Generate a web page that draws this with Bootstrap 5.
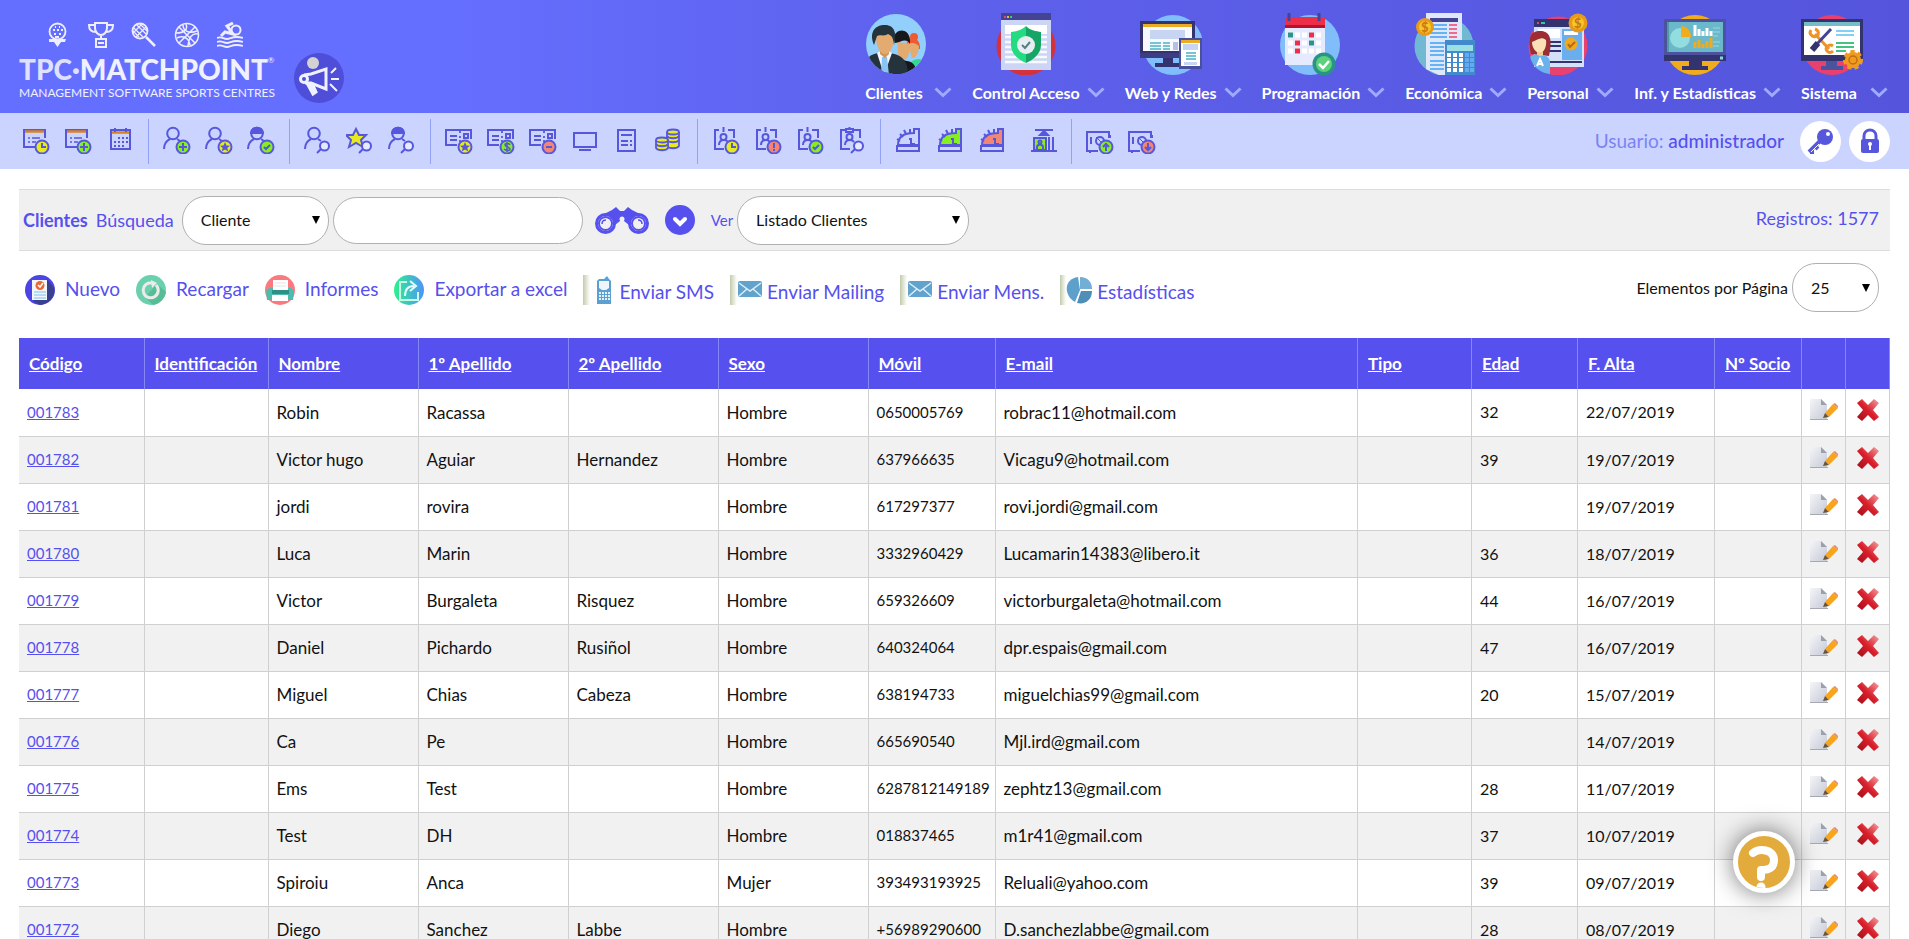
<!DOCTYPE html>
<html lang="es">
<head>
<meta charset="utf-8">
<meta name="viewport" content="width=device-width, initial-scale=1">
<title>TPC Matchpoint - Clientes</title>
<link href="https://cdn.jsdelivr.net/npm/bootstrap@5.3.0/dist/css/bootstrap.min.css" rel="stylesheet">
<style>
:root{--ind:#5650ee;--ico:#5657dd;--bar:#cbd4ff}
body{font-family:Lato,"Liberation Sans",sans-serif;font-size:17px;color:#111;background:#fff}
a{color:var(--ind);text-decoration:none}
svg{display:block;flex:none}
.ln{fill:none;stroke:#5657dd;stroke-width:2}
.top-head{height:113px;background:linear-gradient(90deg,#656fff 0,#656fff 22%,#5e61ec 48%,#5455dc 100%);padding:0 21px 0 19px}
.brand-box{width:259px;color:#f0f1ff}
.brand-sports{gap:17px;padding:22px 0 0 29px}
.brand-name{font-size:28px;line-height:35px;font-weight:900;white-space:nowrap}
.brand-name span{color:#dfe1ff}
.brand-name sup{font-size:8px;font-weight:400;top:-17px}
.brand-sub{font-size:12px;line-height:12px;white-space:nowrap}
.mega{margin-top:53px}
.main-menu{gap:20px;padding-top:13px}
.main-menu a{color:#fff;font-weight:700;font-size:16px;line-height:24px}
.menu-cell{min-width:62px}
.menu-cell svg{margin:0 auto 6px}
.chev{margin:74px 0 0 7px}
.tool-bar{height:56px;background:var(--bar);padding-right:19px}
.tool-group{gap:14px;padding:0 14px 3px;height:45px;border-right:1px solid #93a2f8;align-items:center}
.tool-group:first-child{padding-left:22px}
.tool-group.end-group{border:0}
.tool-group button,.plain-btn{border:0;background:none;padding:0;display:block}
.user-text{font-size:19px;color:#7b83f3}
.user-text b{color:var(--ind);font-weight:500}
.round-btn{width:41px;height:41px;border:0;border-radius:50%;background:#fff;display:grid;place-items:center;padding:0}
.search-bar{margin:20px 19px 0;height:62px;background:#f0f0f0;border-top:1px solid #ddd;border-bottom:1px solid #ddd;padding:0 11px 0 4px;color:var(--ind);font-size:18px}
.pill{border:1px solid #b0b0b0;border-radius:24px;background:#fff;height:49px;font-size:16px;color:#111;padding:0 18px}
select.pill{appearance:none;background:#fff url("data:image/svg+xml,%3Csvg xmlns='http://www.w3.org/2000/svg' width='8' height='8'%3E%3Cpath d='M0 0h8L4 8z'/%3E%3C/svg%3E") no-repeat right 8px center}
.w-kind{width:147px}.w-find{width:250px;height:47px}.w-list{width:232px}.w-page{width:87px}
.small-lbl{font-size:15px}
.page-lbl{font-size:16px}
.act-bar{margin:0 30px 0 25px;height:87px;padding-top:12px}
.act-bar a{font-size:19px;line-height:28px;gap:10px}
.act-bar .ext{gap:5px;padding-top:3px}
.data-tbl{margin:0 19px;width:calc(100% - 38px);table-layout:fixed;border-collapse:collapse}
.data-tbl th{height:51px;background:var(--ind);padding:0 9px 0 10px;border-right:1px solid #8388f6;white-space:nowrap;font-size:17px}
.data-tbl th a{color:#fff;text-decoration:underline}
.data-tbl td{height:47px;padding:0 8px;border-right:1px solid #d0d0d0;border-bottom:1px solid #d0d0d0;white-space:nowrap}
.data-tbl td a{text-decoration:underline}
.data-tbl td:nth-child(1),.data-tbl td:nth-child(7){font-size:15px}
.data-tbl td:nth-child(10),.data-tbl td:nth-child(11){font-size:16px}
.data-tbl tbody tr:nth-child(even){background:#f1f1f1}
.data-tbl .plain-btn{margin-bottom:4px}
.help-btn{position:fixed;right:114px;bottom:46px;width:62px;height:62px;border-radius:50%;border:5px solid #fff;background:#e2ab3c;padding:0;overflow:hidden;box-shadow:0 0 24px rgba(0,0,0,.55)}
</style>
</head>
<body class="vh-100 overflow-hidden">
<svg width="0" height="0" class="position-absolute" aria-hidden="true">
<defs>
<linearGradient id="gEx"><stop stop-color="#2cf28a"/><stop offset="1" stop-color="#4f93fb"/></linearGradient>
<linearGradient id="gRed" x1="1" y1="0" x2="0" y2="1"><stop stop-color="#f6a3a3"/><stop offset=".5" stop-color="#d8202c"/><stop offset="1" stop-color="#a30d18"/></linearGradient>
<linearGradient id="gPg" x1="0" x2="1" y2="1"><stop stop-color="#f4f5f8"/><stop offset="1" stop-color="#c5c9d6"/></linearGradient>
<linearGradient id="gEdge"><stop stop-color="#c2cbaa"/><stop offset="1" stop-color="#fff"/></linearGradient>
<clipPath id="cR"><circle cx="31" cy="31" r="30"/></clipPath>
</defs>
<symbol id="calb" class="ln" viewBox="0 0 28 28"><path d="M23 12V4H2v17h12"/><path d="M3 5.500h19" stroke="#d98324" stroke-width="2.500"/><path d="M6 12h2m2 0h8M6 16h2m2 0h4" stroke-width="1.600"/></symbol>
<symbol id="tcal" class="ln" viewBox="0 0 28 28"><path d="M5 4h19v19H5z"/><path d="M6 6.500h17" stroke="#d98324" stroke-width="2.500"/><path d="M9 2v4M20 2v4"/><path d="M12 12h10M8 16h14M8 20h10" stroke-dasharray="2 2"/></symbol>
<symbol id="pers" class="ln" viewBox="0 0 28 28"><circle cx="10" cy="7.500" r="5.800"/><path d="M1 23c0-5 2-8 6-10m7 0l3 2"/></symbol>
<symbol id="capp" class="ln" viewBox="0 0 28 28"><circle cx="10" cy="7.500" r="5.800"/><path d="M4 7C4 0 16 0 16 7z" fill="#5657dd"/><path d="M1 23c0-5 2-8 6-10m7 0l3 2"/></symbol>
<symbol id="lens" class="ln" viewBox="0 0 28 28"><circle cx="20.500" cy="20" r="4.500" fill="#e6eaff"/><path d="M17 23l-4 4"/></symbol>
<symbol id="tcard" class="ln" viewBox="0 0 28 28"><path d="M26 13V4H1v15h11"/><path d="M5 10h7m-7 4h7m3-9v2m0 3v2m0 2v2" stroke-width="1.800"/><path d="M19 8h4v4h-4z"/></symbol>
<symbol id="tid" class="ln" viewBox="0 0 28 28"><path d="M22 12V4h-6M7 4H3v19h9M11.500 1v5"/><path d="M7 19c0-4 2-5 5-5s3 1 4 2"/><circle cx="11.500" cy="11" r="3"/></symbol>
<symbol id="tcash" class="ln" viewBox="0 0 28 28"><path d="M3 19C3 10 9 7 19 7V3h5v16z"/><path d="M2 20h22v5H2z" fill="#cbd4ff"/><path d="M2 13l3 2m0-7l3 3m1-7l2 4m4-5v4"/><path d="M14 13h2v5h4"/></symbol>
<symbol id="tsafe" class="ln" viewBox="0 0 28 28"><path d="M23 12V6H1v19h11M4 25v2M24 9v3M5 11v7"/><circle cx="14" cy="15" r="4"/><path d="M10 11l8 8" stroke-width="1"/></symbol>
<symbol id="bY" class="ln" viewBox="0 0 28 28"><circle cx="20" cy="21" r="6.500" fill="#e7ea1e"/></symbol>
<symbol id="bG" class="ln" viewBox="0 0 28 28"><circle cx="20" cy="21" r="6.500" fill="#86f01e"/></symbol>
<symbol id="bR" class="ln" viewBox="0 0 28 28"><circle cx="20" cy="21" r="6.500" fill="#f28672"/></symbol>
<symbol id="bstar" viewBox="0 0 28 28"><path d="M20 16l1.500 3.400 3.500.3-2.700 2.300 1 3.500-3.300-1.900-3.300 1.900 1-3.500-2.700-2.300 3.500-.3z" fill="#5657dd"/></symbol>
<symbol id="editI" viewBox="0 0 28 22"><path d="M0 0h11l6 6v15H0z" fill="url(#gPg)"/><path d="M11 0l6 6h-6z" fill="#9aa0b0"/><path d="M0 20.500h18" stroke="#a6a9b4"/><path d="M15 14L23 5l5 4-9 9z" fill="#f9a51b"/><path d="M23 5l2-1 3 3v2z" fill="#e58a6c"/><path d="M15 14l4 4-6 1z" fill="#6b553a"/></symbol>
<symbol id="delI" viewBox="0 0 24 24"><path d="M1 5l5-4 6 6 6-6 5 4-6 7 6 7-5 4-6-6-6 6-5-4 6-7z" fill="url(#gRed)"/></symbol>
<symbol id="mailI" viewBox="0 0 32 30"><path d="M0 0h7v30H0z" fill="url(#gEdge)"/><rect x="8" y="6" width="24" height="16" rx="2" fill="#62a3cd"/><path d="M9 8l11 8 11-8M9 21l8-7m14 7l-8-7" fill="none" stroke="#dceefa" stroke-width="1.500"/></symbol>
<symbol id="chevI" viewBox="0 0 18 11"><path d="M1.500 1.500L9 8.500l7.500-7" fill="none" stroke="#9fabff" stroke-width="3"/></symbol>
</svg>

<header class="top-head d-flex">
<div class="brand-box">
<div class="brand-sports d-flex">
<svg class="me-1" width="19" height="26" viewBox="0 0 19 26" fill="none" stroke="#eef" stroke-width="1.800"><circle cx="9.500" cy="9.500" r="8"/><path d="M5 8h2m2 0h2m2 0h2M6 12h2m3 0h2M7 5h1m3 0h1M7 15h4"/><path d="M1 17h17l-1 3h-4l-3.500 5L6 20H1z" fill="#eef" stroke="none"/></svg>
<svg width="26" height="26" viewBox="0 0 26 26" fill="none" stroke="#eef" stroke-width="2"><path d="M7 1h12v5c0 4-3 7-6 7S7 10 7 6zM7 3H1c0 5 3 7 7 7m11-7h6c0 5-3 7-7 7M13 13v4"/><path d="M8 17h10v8H8z"/><path d="M10 21h6"/></svg>
<svg width="26" height="26" viewBox="0 0 26 26" fill="none" stroke="#eef" stroke-width="1.800"><circle cx="9" cy="9" r="7.500"/><path d="M3 6l9 9M6 3l9 9M2 11l8-8M5 15L15 5M9 2l7 7M2 9l6 6" stroke-width="1.200"/><path d="M15 15l9 9" stroke-width="2.500"/></svg>
<svg width="26" height="26" viewBox="0 0 26 26" fill="none" stroke="#eef" stroke-width="1.500"><circle cx="13" cy="13" r="11.500"/><path d="M5 5l16 16M21 5L5 21M12 2c2 5-1 9-10 9m22 1c-6-1-9 3-10 12M9 3c0 6 6 9 14 6M3 16c6-3 12 0 13 7"/></svg>
<svg width="26" height="26" viewBox="0 0 26 26" fill="none" stroke="#eef" stroke-width="2"><circle cx="19" cy="8" r="4.500"/><path d="M16 1l-6 3 6 8-8-2-4 4" stroke-width="3"/><path d="M0 16c5-2 6 1 10 1s6-4 16-1M0 20c5-2 6 1 10 1s6-4 16-1M0 24c5-2 6 1 10 1s6-4 16-1" stroke-width="1.800"/></svg>
</div>
<div class="brand-name mt-1"><span>TPC·</span>MATCHPOINT<sup>®</sup></div>
<div class="brand-sub">MANAGEMENT SOFTWARE SPORTS CENTRES</div>
</div>
<button class="plain-btn mega align-self-start ms-3" aria-label="Novedades"><svg width="50" height="50" viewBox="0 0 50 50"><circle cx="25" cy="25" r="25" fill="#4f4ed8"/><g fill="none" stroke="#f0f1ff" stroke-width="3"><circle cx="10" cy="26" r="3.500"/><path d="M10 22l7-1 15-5v20l-15-6-6 0"/><path d="M13 30l6 11 3-2-4-9" fill="#f0f1ff"/><path d="M37 20l5-5M37 26h8M36 31l7 7" stroke-width="2"/></g><circle cx="19" cy="10" r="6" fill="#d3d3d3"/></svg></button>
<nav class="main-menu d-flex ms-auto" aria-label="Principal">
<a href="#" class="d-flex align-items-start"><span class="menu-cell"><svg width="62" height="62" viewBox="0 0 62 62"><g clip-path="url(#cR)"><path d="M0 0h62v62H0z" fill="#93cffb"/><path d="M40 62c2-18 18-20 22-10v10z" fill="#34d98f"/><circle cx="49" cy="24" r="4" fill="#ef5a32"/><path d="M41 34c0-12 15-12 14 2" fill="#ef5a32"/><path d="M43 30c3 0 7-1 11 3 0 8-4 12-7 12z" fill="#e3ab70"/><path d="M28 62c0-16 6-16 14-14 8 0 10 10 10 14z" fill="#16181c"/><path d="M33 28c4 4 9-1 12 5 0 6-2 14-7 14-4 0-6-6-5-19z" fill="#e3ab70"/><path d="M29 26c0-12 18-12 16 5-4-7-10-1-15-1z" fill="#16181c"/><path d="M0 62c0-20 6-20 13-22h12c10 2 18 5 18 22z" fill="#24333c"/><path d="M12 40l7 22 8-22-7-4z" fill="#f2f6ff"/><path d="M17 44h5l2 18h-8z" fill="#8ac3f5"/><path d="M15 36h9v5l-4 4-5-4z" fill="#d59653"/><path d="M11 24c0-6 18-6 18 0 0 9-4 17-9 17s-9-8-9-17z" fill="#e3ab70"/><path d="M9 32C4 20 9 12 20 12c10 0 12 9 9 20-1-8-2-9-6-11-5 3-8 0-11 2z" fill="#24333c"/></g></svg>Clientes</span><svg class="chev" width="18" height="11"><use href="#chevI"/></svg></a>
<a href="#" class="d-flex align-items-start"><span class="menu-cell"><svg width="62" height="62" viewBox="0 0 62 62"><circle cx="31" cy="33" r="29.500" fill="#d3323d"/><path d="M6 0h50v57H6z" fill="#ccd6f4"/><path d="M6 0h50v7H6z" fill="#454494"/><path d="M9 4h2" stroke="#e04a5b" stroke-width="2"/><path d="M12 4h2" stroke="#e5c02d" stroke-width="2"/><path d="M15 4h2" stroke="#38c796" stroke-width="2"/><path d="M10 12h42v9H10z" fill="#fff"/><path d="M10 24h42M10 29h42M10 34h42M10 39h42M10 44h42M10 49h42" stroke="#f8faff" stroke-width="2.500"/><path d="M31 13c5 5 10 5 15 6v13c0 9-8 15-15 18z" fill="#17a566"/><path d="M31 13c-5 5-10 5-15 6v13c0 9 8 15 15 18z" fill="#23dc82"/><circle cx="31" cy="32" r="9" fill="#e9eef2"/><path d="M27 32l3 3 5-6" fill="none" stroke="#568087" stroke-width="2"/></svg>Control Acceso</span><svg class="chev" width="18" height="11"><use href="#chevI"/></svg></a>
<a href="#" class="d-flex align-items-start"><span class="menu-cell"><svg width="62" height="62" viewBox="0 0 62 62"><circle cx="33" cy="32" r="30" fill="#80bdfa"/><path d="M0 8h55v37H0z" fill="#33336f"/><path d="M0 40h55v5H0z" fill="#3c3d84"/><path d="M3 11h49v27H3z" fill="#f7f9ff"/><path d="M3 11h49v3H3z" fill="#eaac25"/><path d="M10 17h35v9H10z" fill="#c7d5f3"/><path d="M10 30h11m2 0h7m-20 3h11m2 0h7m-20 3h11m2 0h7" stroke="#74c4d4" stroke-width="2"/><path d="M33 29h5v8h-5z" fill="#b8bfe7"/><path d="M23 45h10v5h6v4H15v-4h8z" fill="#33336f"/><path d="M39 25h23v31H39z" fill="#49509b"/><path d="M41 28h19v25H41z" fill="#fff"/><path d="M41 27h19v3H41z" fill="#eaac25"/><path d="M43 31h15v6H43z" fill="#c7d5f3"/><path d="M46 40h10m-10 3h10m-10 3h10" stroke="#74c4d4" stroke-width="2"/><path d="M44 49h13v3H44z" fill="#c7d5f3"/></svg>Web y Redes</span><svg class="chev" width="18" height="11"><use href="#chevI"/></svg></a>
<a href="#" class="d-flex align-items-start"><span class="menu-cell"><svg width="62" height="62" viewBox="0 0 62 62"><circle cx="30" cy="32" r="30" fill="#80bdfa"/><path d="M5 15h40v37H5z" fill="#e5eaff"/><path d="M5 4h40v11H5z" fill="#ee2d48"/><path d="M5 12h40v3H5z" fill="#b6122b"/><path d="M9 0v8M39 0v8" stroke="#454494" stroke-width="3"/><path d="M8 22h35M8 30h35M8 38h35" stroke="#fff" stroke-width="5" stroke-dasharray="5 2"/><path d="M8 22h5M29 30h5" stroke="#2b9486" stroke-width="5"/><path d="M29 22h5M15 30h5M15 38h5" stroke="#ee2d48" stroke-width="5"/><circle cx="44" cy="51" r="11.500" fill="#299388"/><circle cx="44" cy="51" r="8" fill="#5bd17d"/><path d="M39 51l4 4 6-7" fill="none" stroke="#fff" stroke-width="2.500"/></svg>Programación</span><svg class="chev" width="18" height="11"><use href="#chevI"/></svg></a>
<a href="#" class="d-flex align-items-start"><span class="menu-cell"><svg width="62" height="62" viewBox="0 0 62 62"><circle cx="31" cy="33" r="29.500" fill="#71b9d2"/><path d="M13 0h36v62H26l-13-6z" fill="#dfe8fb"/><path d="M17 5h28v4H17z" fill="#454494"/><path d="M17 12h17M17 16h17M17 20h17M17 24h17M17 30h16M17 34h14M17 38h14M17 42h14M17 48h14M17 52h14M17 56h14" stroke="#65b3f3" stroke-width="2"/><path d="M36 12h8M36 16h8M36 20h8M36 24h8" stroke="#ee6b92" stroke-width="2"/><circle cx="12" cy="14" r="9" fill="#e79b18"/><circle cx="12" cy="14" r="6" fill="#f7c52c"/><text x="8" y="19" font-size="13" font-weight="900" fill="#c97a12">$</text><path d="M32 27h30v35H32z" fill="#4289ce"/><path d="M34 32h26v6H34z" fill="#9adfe4"/><path d="M34 42h17M34 47h17M34 52h17M34 57h17" stroke="#fff" stroke-width="4" stroke-dasharray="4 2"/><path d="M52 42h9M52 47h9M52 52h9M52 57h9" stroke="#63abf0" stroke-width="4" stroke-dasharray="4 1"/></svg>Económica</span><svg class="chev" width="18" height="11"><use href="#chevI"/></svg></a>
<a href="#" class="d-flex align-items-start"><span class="menu-cell"><svg width="62" height="62" viewBox="0 0 62 62"><circle cx="31" cy="33" r="29.500" fill="#e8416f"/><path d="M7 6h50v48H7z" fill="#d3e2fa"/><path d="M7 6h50v8H7z" fill="#33336f"/><path d="M10 10h2" stroke="#e04a5b" stroke-width="2"/><path d="M14 10h4" stroke="#38c796" stroke-width="2"/><path d="M11 16h22v9H11z" fill="#fff"/><path d="M22 29h12M22 33h12M22 38h12M22 49h33" stroke="#33336f" stroke-width="2"/><path d="M35 16h20v31H35z" fill="#69aff0"/><path d="M37 18h14v4H37z" fill="#fff"/><circle cx="44" cy="31" r="6.500" fill="#eea920"/><path d="M41 31l2 3 5-5" fill="none" stroke="#b46b17" stroke-width="2"/><path d="M4 41C0 24 4 18 13 18s13 6 9 25z" fill="#9c2d35"/><path d="M5 29c6-2 9-6 14-2 1 6-2 13-6 13s-8-5-8-11z" fill="#fae0b6"/><path d="M10 39h6v6h-6z" fill="#f3cc91"/><path d="M3 44c4-4 7-2 10-1 4-1 8-1 10 5v13C14 60 6 55 3 44z" fill="#6bb1ec"/><path d="M10 53l3-7 3 7m-5-2h4" fill="none" stroke="#fff" stroke-width="2"/><circle cx="51" cy="10" r="9.500" fill="#e79b18"/><circle cx="51" cy="10" r="6" fill="#f7c52c"/><text x="47" y="15" font-size="13" font-weight="900" fill="#c97a12">$</text></svg>Personal</span><svg class="chev" width="18" height="11"><use href="#chevI"/></svg></a>
<a href="#" class="d-flex align-items-start"><span class="menu-cell"><svg width="62" height="62" viewBox="0 0 62 62"><circle cx="31" cy="32" r="30" fill="#f1ac1d"/><path d="M0 6h62v36H0z" fill="#4b529e"/><path d="M0 42h62v6H0z" fill="#33336f"/><path d="M3 9h56v30H3z" fill="#6ab8c9"/><path d="M3 9h2v30H3z" fill="#4e99a2"/><circle cx="16" cy="25" r="10" fill="#93dce0"/><path d="M17 13c6 0 10 5 10 11H17z" fill="#f1ac1d"/><path d="M31 23V12m4 11v-7m4 7v-5m4 5v-8m4 8v-5" stroke="#fff" stroke-width="3"/><path d="M31 35v-6m4 6v-8m4 8v-4m4 4v-7m4 7V25" stroke="#f1ac1d" stroke-width="3"/><path d="M49 15h7m-7 4h7m-7 4h5m-5 6h7m-7 4h6" stroke="#95d9df"/><path d="M25 48h13v5h6v4H18v-4h7z" fill="#33336f"/><path d="M56 45h3" stroke="#87d3e0" stroke-width="3"/></svg>Inf. y Estadísticas</span><svg class="chev" width="18" height="11"><use href="#chevI"/></svg></a>
<a href="#" class="d-flex align-items-start"><span class="menu-cell"><svg width="62" height="62" viewBox="0 0 62 62"><circle cx="31" cy="32" r="30" fill="#e8416f"/><path d="M0 6h62v42H0z" fill="#33336f"/><path d="M3 9h56v33H3z" fill="#fff"/><path d="M3 9h56v4H3z" fill="#74bdc9"/><path d="M14 21l14 15" stroke="#ee9426" stroke-width="3"/><path d="M10 17c-3 5 4 9 7 5 1-3 0-5-3-6M32 33c-4-3-9 2-6 5 2 2 4 2 6 0" fill="none" stroke="#ee9426" stroke-width="3"/><path d="M30 16L16 31" stroke="#454494" stroke-width="3"/><path d="M17 30l-6 7" stroke="#33336f" stroke-width="6"/><path d="M35 18h18m-18 4h18" stroke="#83d0f6" stroke-width="2"/><path d="M35 30h18m-18 4h18m-18 4h10" stroke="#44c281" stroke-width="2"/><path d="M25 48h11v5h6v4H20v-4h5z" fill="#4b529e"/><circle cx="52" cy="47" r="8" fill="#ef9b1e" stroke="#ef9b1e" stroke-width="4" stroke-dasharray="4 3"/><circle cx="52" cy="47" r="4" fill="none" stroke="#bf6d16" stroke-width="1.500"/></svg>Sistema</span><svg class="chev" width="18" height="11"><use href="#chevI"/></svg></a>
</nav>
</header>

<div class="tool-bar d-flex align-items-center">
<div class="tool-group d-flex">
<button aria-label="Reservas"><svg width="28" height="28"><use href="#calb"/><use href="#bY"/><path d="M20 17v4h4" fill="none" stroke="#5657dd" stroke-width="2"/></svg></button>
<button aria-label="Nueva reserva"><svg width="28" height="28"><use href="#calb"/><use href="#bG"/><path d="M20 17v8m-4-4h8" stroke="#5657dd" stroke-width="2"/></svg></button>
<button aria-label="Calendario"><svg width="28" height="28"><use href="#tcal"/></svg></button>
</div>
<div class="tool-group d-flex">
<button aria-label="Nuevo cliente"><svg width="28" height="28"><use href="#pers"/><use href="#bG"/><path d="M20 17v8m-4-4h8" stroke="#5657dd" stroke-width="2"/></svg></button>
<button aria-label="Nuevo socio"><svg width="28" height="28"><use href="#pers"/><use href="#bY"/><use href="#bstar"/></svg></button>
<button aria-label="Nuevo alumno"><svg width="28" height="28"><use href="#capp"/><use href="#bG"/><path d="M17 21l2 2 4-4" fill="none" stroke="#5657dd" stroke-width="2"/></svg></button>
</div>
<div class="tool-group d-flex">
<button aria-label="Buscar cliente"><svg width="28" height="28"><use href="#pers"/><use href="#lens"/></svg></button>
<button aria-label="Buscar socio"><svg width="28" height="28"><path d="M10 3l3 6h7l-5 5 2 7-7-4-7 4 2-7-5-5h7z" fill="#e7ea1e" stroke="#5657dd" stroke-width="2"/><use href="#lens"/></svg></button>
<button aria-label="Buscar alumno"><svg width="28" height="28"><use href="#capp"/><use href="#lens"/></svg></button>
</div>
<div class="tool-group d-flex">
<button aria-label="Abonos"><svg width="28" height="28"><use href="#tcard"/><use href="#bY"/><use href="#bstar"/></svg></button>
<button aria-label="Cobrar"><svg width="28" height="28"><use href="#tcard"/><use href="#bG"/><path d="M23 19c-1-2-5-2-5 0s5 2 5 4-4 2-6 0M20 16v10" fill="none" stroke="#5657dd" stroke-width="1.500"/></svg></button>
<button aria-label="Anular"><svg width="28" height="28"><use href="#tcard"/><use href="#bR"/><path d="M17 21h6" stroke="#5657dd" stroke-width="2"/></svg></button>
<button aria-label="Pantalla"><svg width="28" height="28" fill="none" stroke="#5657dd" stroke-width="2"><path d="M3 7h22v14H3zM8 24h12"/></svg></button>
<button aria-label="Documento"><svg width="28" height="28" fill="none" stroke="#5657dd" stroke-width="2"><path d="M5 4h17v21H5zM8 9h11M8 15h7m2 0h2M8 19h7m2 0h2"/></svg></button>
<button aria-label="Monedas"><svg width="28" height="28" fill="#e7ea1e" stroke="#5657dd" stroke-width="1.800"><path d="M12 6v14c2 3 10 3 12 0V6"/><ellipse cx="18" cy="6" rx="6" ry="2.500"/><path d="M12 10c2 3 10 3 12 0M12 14c2 3 10 3 12 0"/><path d="M1 14v8c2 3 10 3 12 0v-8"/><ellipse cx="7" cy="14" rx="6" ry="2.500"/><path d="M1 18c2 3 10 3 12 0"/></svg></button>
</div>
<div class="tool-group d-flex">
<button aria-label="Acreditaciones"><svg width="28" height="28"><use href="#tid"/><use href="#bY"/><path d="M20 17v4h4" fill="none" stroke="#5657dd" stroke-width="2"/></svg></button>
<button aria-label="Incidencias"><svg width="28" height="28"><use href="#tid"/><use href="#bR"/><path d="M20 17v5m0 1v2" stroke="#5657dd" stroke-width="2"/></svg></button>
<button aria-label="Validar"><svg width="28" height="28"><use href="#tid"/><use href="#bG"/><path d="M17 21l2 2 4-4" fill="none" stroke="#5657dd" stroke-width="2"/></svg></button>
<button aria-label="Buscar acreditación"><svg width="28" height="28"><use href="#tid"/><path d="M8 3h7v3H8z" fill="#cbd4ff" stroke="#5657dd" stroke-width="2"/><use href="#lens"/></svg></button>
</div>
<div class="tool-group d-flex">
<button aria-label="Caja"><svg width="28" height="28"><use href="#tcash"/></svg></button>
<button aria-label="Abrir caja"><svg width="28" height="28"><path d="M3 19C3 10 9 7 19 7V3h5v16z" fill="#86f01e"/><use href="#tcash"/></svg></button>
<button aria-label="Cerrar caja"><svg width="28" height="28"><path d="M3 19C3 10 9 7 19 7V3h5v16z" fill="#f28672"/><use href="#tcash"/></svg></button>
<button class="ms-2" aria-label="Accesos"><svg width="28" height="28" fill="none" stroke="#5657dd" stroke-width="2"><path d="M6 4h18"/><path d="M15 5l4 4h-8z" fill="#5657dd"/><path d="M5 12h12v12H5z" fill="#86f01e"/><path d="M8 24v-3c0-3 6-3 6 0v3M20 11v13M24 11v13M2 25h26"/><circle cx="11" cy="16" r="1.500"/></svg></button>
</div>
<div class="tool-group end-group d-flex">
<button aria-label="Ingreso"><svg width="28" height="28"><use href="#tsafe"/><use href="#bG"/><path d="M20 25v-7m-3 3l3-3 3 3" fill="none" stroke="#5657dd" stroke-width="2"/></svg></button>
<button aria-label="Retirada"><svg width="28" height="28"><use href="#tsafe"/><use href="#bR"/><path d="M20 17v7m-3-3l3 3 3-3" fill="none" stroke="#5657dd" stroke-width="2"/></svg></button>
</div>
<div class="user-text ms-auto">Usuario: <b>administrador</b></div>
<button class="round-btn ms-3" aria-label="Cambiar clave"><svg width="27" height="27" viewBox="0 0 27 27"><circle cx="18" cy="9" r="8" fill="#5657dd"/><circle cx="21" cy="6" r="2" fill="#fff"/><path d="M13 13L2 24m3-3v5m3-8l3 3" stroke="#5657dd" stroke-width="4"/><path d="M12 16l-8 8" stroke="#fff"/></svg></button>
<button class="round-btn ms-2" aria-label="Cerrar sesión"><svg width="20" height="26" viewBox="0 0 20 26"><path d="M4 13V8c0-8 12-8 12 0v5" fill="none" stroke="#5657dd" stroke-width="3"/><rect x="1" y="11" width="18" height="14" rx="2" fill="#5657dd"/><circle cx="10" cy="16" r="2" fill="#fff"/><path d="M10 16v6" stroke="#fff" stroke-width="2"/></svg></button>
</div>

<main>
<form class="search-bar d-flex align-items-center">
<b class="me-2">Clientes</b><label for="kind">Búsqueda</label>
<select id="kind" class="pill w-kind ms-2"><option>Cliente</option></select>
<input type="text" class="pill w-find ms-1" aria-label="Texto de búsqueda">
<button type="button" class="plain-btn ms-2 ps-1" aria-label="Buscar"><svg width="54" height="27" viewBox="0 0 54 27"><path d="M3 10L17 3l4-3 4 4h4l4-4 4 3 14 7-12 12-10-8h-4l-10 8z" fill="#5650ee"/><g fill="#fff" stroke="#5650ee" stroke-width="3"><circle cx="10.500" cy="16.500" r="9"/><circle cx="43.500" cy="16.500" r="9"/></g><g fill="#f0f0f0" stroke="#5650ee" stroke-width="2"><circle cx="10.500" cy="16.500" r="6.500"/><circle cx="43.500" cy="16.500" r="6.500"/></g><path d="M7 17c0-3 2-4 4-4m32 0c2 0 4 1 4 4" fill="none" stroke="#5650ee" stroke-width="1.500"/><circle cx="27" cy="12" r="2.500" fill="#f0f0f0"/></svg></button>
<button type="button" class="plain-btn ms-3" aria-label="Más filtros"><svg width="30" height="30" viewBox="0 0 30 30"><circle cx="15" cy="15" r="15" fill="#5650ee"/><path d="M10 14l5 5 5-5" fill="none" stroke="#fff" stroke-width="4" stroke-linecap="round"/></svg></button>
<label for="list" class="small-lbl ms-3">Ver</label>
<select id="list" class="pill w-list ms-1"><option>Listado Clientes</option></select>
<span class="ms-auto pb-1">Registros: 1577</span>
</form>

<div class="act-bar d-flex align-items-start">
<div class="d-flex flex-wrap pt-2 mt-1 gap-3">
<a href="#" class="d-flex"><svg width="30" height="30" viewBox="0 0 30 30"><circle cx="15" cy="15" r="15" fill="#4c44e4"/><path d="M22 4l7 9c2 8-5 16-14 17l-7-4z" fill="#39408d"/><path d="M7 5h15v20H7z" fill="#f2f7ff"/><path d="M9 17h12M9 20h12M9 23h12" stroke="#b7dbf3" stroke-width="2"/><circle cx="15" cy="10.500" r="4.500" fill="#ee6931"/><path d="M13 10l2 2 3-4" fill="none" stroke="#fff" stroke-width="1.500"/></svg>Nuevo</a>
<a href="#" class="d-flex"><svg width="30" height="30" viewBox="0 0 30 30"><circle cx="15" cy="15" r="15" fill="#6bd0ad"/><path d="M21 9l9 8c-1 6-6 12-13 13l-8-8z" fill="#57bd97"/><path d="M20 10a7.500 7.500 0 1 1-7-2h3" fill="none" stroke="#ebebeb" stroke-width="3"/><path d="M15 5l6 3-5 5z" fill="#ebebeb"/></svg>Recargar</a>
<a href="#" class="d-flex"><svg width="30" height="30" viewBox="0 0 30 30"><circle cx="15" cy="15" r="15" fill="#fb7a80"/><path d="M4 13h22l3 3-1 9H2l-1-9z" fill="#4cbcae"/><path d="M8 5h15v12H8z" fill="#fff"/><path d="M10 8h11M10 11h11" stroke="#e3e3e3"/><path d="M7 15h17v4H7z" fill="#2f8f87"/><path d="M7 20h16v6H7z" fill="#fff"/></svg>Informes</a>
<a href="#" class="d-flex"><svg width="30" height="30" viewBox="0 0 30 30"><circle cx="15" cy="15" r="15" fill="url(#gEx)"/><path d="M13 7H6v18h18v-8" fill="none" stroke="#c9fbe9" stroke-width="2"/><path d="M11 21c0-7 3-10 9-10m-4-5l6 5-6 5" fill="none" stroke="#e6fdff" stroke-width="2"/></svg>Exportar a excel</a>
<a href="#" class="d-flex ext p-0"><svg width="31" height="30" viewBox="0 0 31 30"><path d="M0 0h7v30H0z" fill="url(#gEdge)"/><path d="M21 4l3-3 2 3 2 2v23H14V6l2-2z" fill="#5aa0d2"/><path d="M16 6h10v7l-3 2h-4l-3-2z" fill="#eef6fc"/><path d="M16 18h11M16 21h11M16 24h11" stroke="#e4f1fa" stroke-width="2" stroke-dasharray="2 1"/></svg><span class="ext">Enviar SMS</span></a>
<a href="#" class="d-flex ext p-0"><svg width="32" height="30"><use href="#mailI"/></svg><span class="ext">Enviar Mailing</span></a>
<a href="#" class="d-flex ext p-0"><svg width="32" height="30"><use href="#mailI"/></svg><span class="ext">Enviar Mens.</span></a>
<a href="#" class="d-flex ext p-0"><svg width="32" height="30" viewBox="0 0 32 30"><path d="M0 0h6v30H0z" fill="url(#gEdge)"/><path d="M18 2C3 4 4 21 15 27l5-12z" fill="#5da0cb"/><path d="M20 2v12h12C32 7 28 2 20 2z" fill="#73afd4"/><path d="M21 16h11c0 9-7 14-15 12z" fill="#4f8fb7"/></svg><span class="ext">Estadísticas</span></a>
</div>
<div class="ms-auto d-flex align-items-center">
<label for="pages" class="page-lbl me-1">Elementos por Página</label>
<select id="pages" class="pill w-page"><option>25</option></select>
</div>
</div>

<table class="data-tbl">
<colgroup><col style="width:125px"><col style="width:124px"><col style="width:150px"><col style="width:150px"><col style="width:150px"><col style="width:150px"><col style="width:127px"><col><col style="width:114px"><col style="width:106px"><col style="width:137px"><col style="width:87px"><col style="width:44px"><col style="width:44px"></colgroup>
<thead><tr><th><a href="#">Código</a></th><th><a href="#">Identificación</a></th><th><a href="#">Nombre</a></th><th><a href="#">1º Apellido</a></th><th><a href="#">2º Apellido</a></th><th><a href="#">Sexo</a></th><th><a href="#">Móvil</a></th><th><a href="#">E-mail</a></th><th><a href="#">Tipo</a></th><th><a href="#">Edad</a></th><th><a href="#">F. Alta</a></th><th><a href="#">Nº Socio</a></th><th></th><th></th></tr></thead>
<tbody id="rows">
</tbody>
</table>
</main>
<button class="help-btn" aria-label="Ayuda"><svg width="52" height="52" viewBox="0 0 52 52" fill="none" stroke="#fff" stroke-width="8" stroke-linecap="round" stroke-linejoin="round"><path d="M15 17c6-5 21-4 21 7 0 8-5 10-13 10v7"/><path d="M23 51v2" stroke-width="9"/></svg></button>

<script src="https://cdn.jsdelivr.net/npm/bootstrap@5.3.0/dist/js/bootstrap.bundle.min.js"></script>
<script>
const clients = [
  ['001783','','Robin','Racassa','','Hombre','0650005769','robrac11@hotmail.com','','32','22/07/2019',''],
  ['001782','','Victor hugo','Aguiar','Hernandez','Hombre','637966635','Vicagu9@hotmail.com','','39','19/07/2019',''],
  ['001781','','jordi','rovira','','Hombre','617297377','rovi.jordi@gmail.com','','','19/07/2019',''],
  ['001780','','Luca','Marin','','Hombre','3332960429','Lucamarin14383@libero.it','','36','18/07/2019',''],
  ['001779','','Victor','Burgaleta','Risquez','Hombre','659326609','victorburgaleta@hotmail.com','','44','16/07/2019',''],
  ['001778','','Daniel','Pichardo','Rusiñol','Hombre','640324064','dpr.espais@gmail.com','','47','16/07/2019',''],
  ['001777','','Miguel','Chias','Cabeza','Hombre','638194733','miguelchias99@gmail.com','','20','15/07/2019',''],
  ['001776','','Ca','Pe','','Hombre','665690540','Mjl.ird@gmail.com','','','14/07/2019',''],
  ['001775','','Ems','Test','','Hombre','6287812149189','zephtz13@gmail.com','','28','11/07/2019',''],
  ['001774','','Test','DH','','Hombre','018837465','m1r41@gmail.com','','37','10/07/2019',''],
  ['001773','','Spiroiu','Anca','','Mujer','393493193925','Reluali@yahoo.com','','39','09/07/2019',''],
  ['001772','','Diego','Sanchez','Labbe','Hombre','+56989290600','D.sanchezlabbe@gmail.com','','28','08/07/2019','']
];
document.getElementById('rows').innerHTML = clients.map(c =>
  '<tr>' + c.map((v, i) => i ? `<td>${v}</td>` : `<td><a href="#">${v}</a></td>`).join('') +
  '<td><button class="plain-btn" aria-label="Editar"><svg width="28" height="22"><use href="#editI"/></svg></button></td>' +
  '<td><button class="plain-btn mx-auto" aria-label="Eliminar"><svg width="24" height="24"><use href="#delI"/></svg></button></td></tr>').join('');
</script>
</body>
</html>
